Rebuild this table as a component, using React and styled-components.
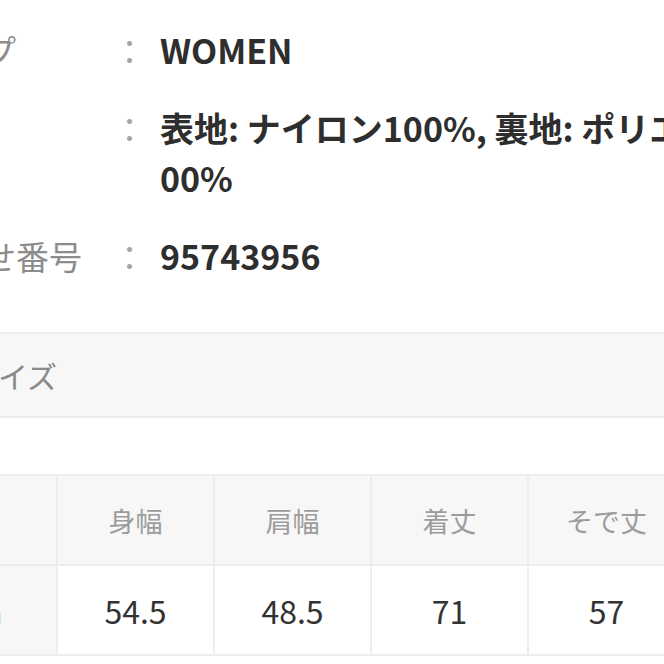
import React from "react";
import styled, { createGlobalStyle } from "styled-components";

const Global = createGlobalStyle`
  html, body {
    margin: 0;
    padding: 0;
    background: #ffffff;
    overflow: hidden;
  }
  body {
    font-family: "Noto Sans CJK JP", "Noto Sans", sans-serif;
  }
`;

const Page = styled.div`
  width: 1000px;
  margin-left: -182px;
  padding-top: 25px;
`;

const SpecList = styled.dl`
  display: grid;
  grid-template-columns: 295px 47px 650px;
  row-gap: 28px;
  margin: 0;
  font-size: 33px;
  line-height: 50px;
`;

const Label = styled.dt`
  color: #8c8c8c;
  font-weight: 400;
  white-space: nowrap;
`;

const Colon = styled.span`
  color: #a6a6a6;
  font-weight: 400;
`;

const Value = styled.dd`
  margin: 0;
  color: #2e2e2e;
  font-size: 34px;
  font-weight: 700;
  word-break: break-all;
`;

const Band = styled.div`
  margin-top: 51px;
  height: 82px;
  display: flex;
  align-items: center;
  background: #f7f7f7;
  border-top: 2px solid #ececec;
  border-bottom: 2px solid #ececec;
  font-size: 30px;
  color: #8a8a8a;
  white-space: nowrap;
`;

const Table = styled.table`
  margin-top: 56px;
  border-collapse: collapse;
  table-layout: fixed;
  font-size: 32px;
`;

const Cell = styled.td`
  width: ${(p) => (p.$first ? "228px" : "155px")};
  height: 88px;
  padding: 0 0 0 ${(p) => (p.$first ? "8px" : "0")};
  text-align: center;
  vertical-align: middle;
  border: 2px solid #ededed;
  background: ${(p) => (p.$head || p.$first ? "#f7f7f7" : "#ffffff")};
  color: ${(p) => (p.$head ? "#9c9c9c" : p.$first ? "#5a5a5a" : "#333333")};
  font-size: ${(p) => (p.$head ? "27px" : "32px")};
  font-weight: 400;
  white-space: nowrap;
`;

const specs = [
  { label: "対象者タイプ", value: "WOMEN" },
  { label: "素材", value: "表地: ナイロン100%, 裏地: ポリエステル100%" },
  { label: "お問い合わせ番号", value: "95743956" },
];

const heads = ["身幅", "肩幅", "着丈", "そで丈"];
const sizes = [{ name: "Medium", values: ["54.5", "48.5", "71", "57"] }];

export default function App() {
  return (
    <>
      <Global />
      <Page>
        <SpecList>
          {specs.map((s) => (
            <React.Fragment key={s.label}>
              <Label>{s.label}</Label>
              <Colon>：</Colon>
              <Value>{s.value}</Value>
            </React.Fragment>
          ))}
        </SpecList>
        <Band>商品の実寸サイズ</Band>
        <Table>
          <thead>
            <tr>
              <Cell as="th" $first $head />
              {heads.map((h) => (
                <Cell as="th" key={h} $head>
                  {h}
                </Cell>
              ))}
            </tr>
          </thead>
          <tbody>
            {sizes.map((row) => (
              <tr key={row.name}>
                <Cell $first>{row.name}</Cell>
                {row.values.map((v, i) => (
                  <Cell key={i}>{v}</Cell>
                ))}
              </tr>
            ))}
          </tbody>
        </Table>
      </Page>
    </>
  );
}
